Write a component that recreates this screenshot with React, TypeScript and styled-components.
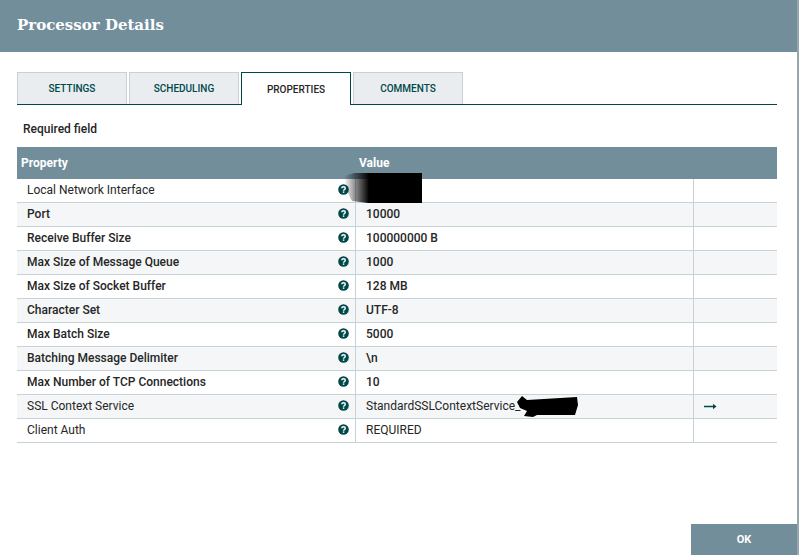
import React from "react";
import styled, { createGlobalStyle } from "styled-components";

const Global = createGlobalStyle`
  html, body { margin: 0; padding: 0; background: #96a7af; overflow: hidden; }
  * { box-sizing: border-box; }
`;

const Dialog = styled.div`
  width: 797px;
  height: 555px;
  display: flex;
  flex-direction: column;
  background: #fff;
  font-family: Roboto, "Liberation Sans", sans-serif;
  font-size: 12px;
  color: #262626;
  overflow: hidden;
`;

const Header = styled.header`
  height: 52px;
  background: #728e9b;
  padding: 0 0 2px 17px;
  display: flex;
  align-items: center;
  flex: none;
`;

const Title = styled.h1`
  margin: 0;
  font-family: "DejaVu Serif", "Liberation Serif", serif;
  font-size: 15px;
  font-weight: 700;
  color: #fff;
`;

const Body = styled.main`
  flex: 1;
  padding: 20px 20px 0 17px;
`;

const Tabs = styled.div`
  display: flex;
  gap: 2px;
  height: 33px;
  border-bottom: 1px solid #004849;
`;

const Tab = styled.div<{ $active?: boolean }>`
  width: 110px;
  height: ${(p) => (p.$active ? "33px" : "32px")};
  display: flex;
  align-items: center;
  justify-content: center;
  font-size: 10px;
  font-weight: 500;
  text-transform: uppercase;
  color: ${(p) => (p.$active ? "#262626" : "#004849")};
  background: ${(p) => (p.$active ? "#fff" : "#e9edf0")};
  border: 1px solid ${(p) => (p.$active ? "#004849" : "#c7d2d7")};
  border-bottom: none;
`;

const Required = styled.div`
  height: 42px;
  padding: 17px 0 0 6px;
  font-weight: 500;
  line-height: 14px;
`;

const Table = styled.div`
  width: 760px;
`;

const HeadRow = styled.div`
  display: grid;
  grid-template-columns: 338px 1fr;
  height: 32px;
  align-items: center;
  background: #728e9b;
  color: #fff;
  font-weight: 700;
  padding-left: 4px;
`;

const Row = styled.div<{ $alt?: boolean }>`
  display: grid;
  grid-template-columns: 338px 338px 1fr;
  height: 24px;
  background: ${(p) => (p.$alt ? "#f4f6f7" : "#fff")};
  border-bottom: 1px solid #c7d2d7;
  line-height: 22px;
`;

const NameCell = styled.div<{ $required?: boolean }>`
  display: flex;
  align-items: center;
  justify-content: space-between;
  padding: 0 6px 1px 10px;
  font-weight: ${(p) => (p.$required ? 500 : 400)};
  color: #262626;
`;

const ValueCell = styled.div<{ $required?: boolean }>`
  position: relative;
  padding-left: 10px;
  border-left: 1px solid #c7d2d7;
  color: #262626;
  font-weight: ${(p) => (p.$required ? 500 : 400)};
  white-space: nowrap;
`;

const ActionCell = styled.div`
  display: flex;
  align-items: center;
  padding-left: 10px;
  border-left: 1px solid #c7d2d7;
`;

const Redaction = styled.svg`
  position: absolute;
  overflow: visible;
  pointer-events: none;
`;

const InterfaceBlot = styled(Redaction)`
  left: -14px;
  top: -6px;
  width: 80px;
  height: 30px;
`;

const ServiceBlot = styled(Redaction)`
  left: 161px;
  top: 0;
  width: 62px;
  height: 23px;
`;

const Footer = styled.footer`
  flex: none;
  height: 31px;
  display: flex;
  justify-content: flex-end;
`;

const OkButton = styled.button`
  width: 106px;
  height: 31px;
  border: 0;
  padding: 0;
  background: #728e9b;
  color: #fff;
  font: 700 11px Roboto, "Liberation Sans", sans-serif;
`;

const HelpIcon = styled.svg`
  width: 11px;
  height: 11px;
  flex: none;
  margin-bottom: 2px;
`;

const Help = () => (
  <HelpIcon viewBox="0 0 11 11" aria-hidden="true">
    <circle cx="5.5" cy="5.5" r="5.3" fill="#004849" />
    <path d="M3.7 4.3C3.8 3.2 4.5 2.7 5.5 2.7c1.1 0 1.8.6 1.8 1.5 0 1.3-1.6 1.2-1.7 2.5" fill="none" stroke="#fff" strokeWidth="1.4" />
    <rect x="4.8" y="7.4" width="1.5" height="1.4" fill="#fff" />
  </HelpIcon>
);

const Arrow = () => (
  <svg width="13" height="7" viewBox="0 0 13 7" aria-hidden="true">
    <path d="M0 3.5h10" stroke="#004849" strokeWidth="1.5" />
    <path d="M9 .8 12.5 3.5 9 6.2z" fill="#004849" />
  </svg>
);

type Prop = { name: string; value: string; required?: boolean; arrow?: boolean; blot?: "interface" | "service" };

const rows: Prop[] = [
  { name: "Local Network Interface", value: "", blot: "interface" },
  { name: "Port", value: "10000", required: true },
  { name: "Receive Buffer Size", value: "100000000 B", required: true },
  { name: "Max Size of Message Queue", value: "1000", required: true },
  { name: "Max Size of Socket Buffer", value: "128 MB", required: true },
  { name: "Character Set", value: "UTF-8", required: true },
  { name: "Max Batch Size", value: "5000", required: true },
  { name: "Batching Message Delimiter", value: "\\n", required: true },
  { name: "Max Number of TCP Connections", value: "10", required: true },
  { name: "SSL Context Service", value: "StandardSSLContextService_", arrow: true, blot: "service" },
  { name: "Client Auth", value: "REQUIRED" },
];

export default function App() {
  return (
    <>
      <Global />
      <Dialog>
        <Header>
          <Title>Processor Details</Title>
        </Header>
        <Body>
          <Tabs>
            <Tab>Settings</Tab>
            <Tab>Scheduling</Tab>
            <Tab $active>Properties</Tab>
            <Tab>Comments</Tab>
          </Tabs>
          <Required>Required field</Required>
          <Table>
            <HeadRow>
              <span>Property</span>
              <span>Value</span>
            </HeadRow>
            {rows.map((r, i) => (
              <Row key={r.name} $alt={i % 2 === 1}>
                <NameCell $required={r.required}>
                  {r.name}
                  <Help />
                </NameCell>
                <ValueCell $required={r.required}>
                  {r.value}
                  {r.blot === "interface" && (
                    <InterfaceBlot viewBox="0 0 80 30" aria-hidden="true">
                      <defs>
                        <linearGradient id="fade" x1="0" x2="1" y1="0" y2="0">
                          <stop offset="0" stopColor="#000" stopOpacity="0" />
                          <stop offset="0.32" stopColor="#000" />
                          <stop offset="1" stopColor="#000" />
                        </linearGradient>
                      </defs>
                      <path d="M2 3 12 0H80V30H26L10 28 4 16z" fill="url(#fade)" />
                    </InterfaceBlot>
                  )}
                  {r.blot === "service" && (
                    <ServiceBlot viewBox="0 0 62 23" aria-hidden="true">
                      <path d="M0 7 5 1 10 5 60 2 61 10 58 20 20 20 16 22 7 21 10 16 3 13z" fill="#000" />
                    </ServiceBlot>
                  )}
                </ValueCell>
                <ActionCell>{r.arrow && <Arrow />}</ActionCell>
              </Row>
            ))}
          </Table>
        </Body>
        <Footer>
          <OkButton>OK</OkButton>
        </Footer>
      </Dialog>
    </>
  );
}
